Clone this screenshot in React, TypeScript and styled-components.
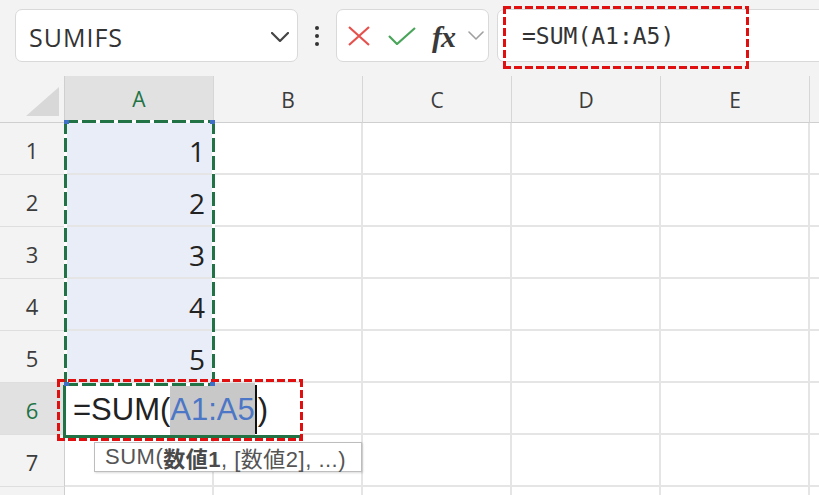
import React from 'react';
import styled, { createGlobalStyle } from 'styled-components';

const GlobalStyle = createGlobalStyle`
  html, body {
    margin: 0;
    padding: 0;
    background: #ffffff;
  }
  body {
    font-family: "Open Sans", "Liberation Sans", "Noto Sans CJK JP", sans-serif;
    overflow: hidden;
  }
`;

const COLS = ['A', 'B', 'C', 'D', 'E', 'F'];
const ROWS = [1, 2, 3, 4, 5, 6, 7, 8];
const VALUES: Record<number, string> = { 1: '1', 2: '2', 3: '3', 4: '4', 5: '5' };

const Page = styled.div`
  width: 819px;
  height: 495px;
  overflow: hidden;
  position: relative;
  background: #f3f3f3;
`;

/* ---------- formula toolbar ---------- */

const Toolbar = styled.div`
  position: relative;
  display: flex;
  align-items: flex-start;
  height: 76px;
  padding: 9px 0 0 15px;
  box-sizing: border-box;
  background: #f3f3f3;
`;

const Box = styled.div<{ $width?: number }>`
  display: flex;
  align-items: center;
  height: 53px;
  box-sizing: border-box;
  background: #ffffff;
  border: 1px solid #d9d9d9;
  border-radius: 7px;
  ${(p) => (p.$width ? `width: ${p.$width}px;` : 'flex: 1; margin-right: -12px;')}
`;

const NameBox = styled(Box)`
  justify-content: space-between;
  padding: 3px 8px 0 13px;
  font-size: 25px;
  letter-spacing: 1px;
  color: #333;
`;

const Kebab = styled.div`
  width: 38px;
  height: 53px;
  display: flex;
  flex-direction: column;
  align-items: center;
  justify-content: center;
  gap: 4px;

  span {
    width: 4px;
    height: 4px;
    border-radius: 50%;
    background: #333;
  }
`;

const ButtonsBox = styled(Box)`
  padding-left: 11px;
`;

const IconSlot = styled.div<{ $w: number }>`
  width: ${(p) => p.$w}px;
  display: flex;
  align-items: center;
  justify-content: flex-start;
`;

const Fx = styled.span`
  font-family: "Liberation Serif", "DejaVu Serif", serif;
  font-style: italic;
  font-weight: bold;
  font-size: 30px;
  color: #3a3a3a;
  letter-spacing: -1px;
  line-height: 1;
  margin-top: 2px;
`;

const FormulaBox = styled(Box)`
  margin-left: 8px;
  padding: 1px 0 0 24px;
  border-radius: 7px 0 0 7px;
  font-family: "DejaVu Sans Mono", "Liberation Mono", monospace;
  font-size: 23px;
  color: #333;
`;

/* ---------- dashed frames (overlays) ---------- */

type FrameProps = {
  $left: number;
  $top: number;
  $width: number;
  $height: number;
  $color: string;
  $gapColor: string;
  $w: number;
  $dash: number;
  $gap: number;
};

const stripes = (p: FrameProps, deg: number) =>
  `repeating-linear-gradient(${deg}deg, ${p.$color} 0 ${p.$dash}px, ${p.$gapColor} ${p.$dash}px ${p.$dash + p.$gap}px)`;

const DashedFrame = styled.div<FrameProps>`
  position: absolute;
  left: ${(p) => p.$left}px;
  top: ${(p) => p.$top}px;
  width: ${(p) => p.$width}px;
  height: ${(p) => p.$height}px;
  pointer-events: none;
  z-index: 5;
  background:
    ${(p) => stripes(p, 90)} top left / 100% ${(p) => p.$w}px no-repeat,
    ${(p) => stripes(p, 90)} bottom left / 100% ${(p) => p.$w}px no-repeat,
    ${(p) => stripes(p, 180)} top left / ${(p) => p.$w}px 100% no-repeat,
    ${(p) => stripes(p, 180)} top right / ${(p) => p.$w}px 100% no-repeat;
`;

const Handle = styled.div<{ $left: number; $top: number }>`
  position: absolute;
  left: ${(p) => p.$left}px;
  top: ${(p) => p.$top}px;
  width: 5px;
  height: 4px;
  background: #3f6fc6;
  z-index: 6;
`;

/* ---------- sheet grid ---------- */

const Sheet = styled.div`
  position: relative;
  display: grid;
  grid-template-columns: 65px repeat(6, 149px);
  grid-template-rows: 47px repeat(8, 52px);
  background: #ffffff;
`;

const Corner = styled.div`
  background: #f3f3f3;
  border-right: 1px solid #cfcfcf;
  border-bottom: 1px solid #cfcfcf;
  box-sizing: border-box;
  display: flex;
  align-items: flex-end;
  justify-content: flex-end;
  padding: 0 5px 6px 0;

  &::after {
    content: '';
    width: 33px;
    height: 29px;
    background: #d8d8d8;
    clip-path: polygon(100% 0, 100% 100%, 0 100%);
  }
`;

const ColHeader = styled.div<{ $active?: boolean }>`
  display: flex;
  align-items: center;
  justify-content: center;
  padding-top: 2px;
  box-sizing: border-box;
  font-size: 21px;
  color: ${(p) => (p.$active ? '#217346' : '#3c3c3c')};
  background: ${(p) => (p.$active ? '#e1e1e1' : '#f3f3f3')};
  border-right: 1px solid #d6d6d6;
  border-bottom: ${(p) => (p.$active ? '3px solid #217346' : '1px solid #cfcfcf')};
`;

const RowHeader = styled.div<{ $active?: boolean }>`
  display: flex;
  align-items: center;
  justify-content: center;
  padding-top: 3px;
  box-sizing: border-box;
  font-size: 22px;
  color: ${(p) => (p.$active ? '#217346' : '#3c3c3c')};
  background: ${(p) => (p.$active ? '#e1e1e1' : '#f3f3f3')};
  border-right: 1px solid #cfcfcf;
  border-bottom: 1px solid #dedede;
`;

const Cell = styled.div<{ $selected?: boolean }>`
  display: flex;
  align-items: center;
  justify-content: flex-end;
  padding: 5px 7px 0 0;
  box-sizing: border-box;
  font-size: 28px;
  color: #222;
  background: ${(p) => (p.$selected ? '#e9edf7' : '#ffffff')};
  border-right: 2px solid #e5e5e5;
  border-bottom: 2px solid #e5e5e5;
`;

/* ---------- in-cell editor ---------- */

const Editor = styled.div`
  position: absolute;
  left: 63px;
  top: 309px;
  width: 237px;
  height: 53px;
  box-sizing: border-box;
  display: flex;
  align-items: stretch;
  padding-left: 7px;
  background: #ffffff;
  border-left: 3px solid #217346;
  border-bottom: 3px solid #217346;
  font-family: "Liberation Sans", "Open Sans", sans-serif;
  font-size: 31px;
  color: #222;
  z-index: 4;
`;

const Piece = styled.span<{ $ref?: boolean }>`
  display: flex;
  align-items: center;
  margin-top: -2px;
  padding-top: 2px;
  ${(p) => (p.$ref ? 'background: #c8c8c8; color: #4c76c6;' : '')}
`;

const Caret = styled.span`
  width: 2px;
  background: #111;
  margin: 0 1px 1px 0;
`;

const Tip = styled.div`
  position: absolute;
  left: 94px;
  top: 366px;
  height: 30px;
  width: 268px;
  box-sizing: border-box;
  display: flex;
  align-items: center;
  padding-left: 10px;
  background: #ffffff;
  border: 1px solid #bdbdbd;
  box-shadow: 1px 1px 2px rgba(0, 0, 0, 0.15);
  font-family: "Liberation Sans", "Noto Sans CJK JP", sans-serif;
  font-size: 22px;
  letter-spacing: 0.5px;
  color: #555;
  white-space: nowrap;
  z-index: 6;

  b {
    font-weight: bold;
    color: #4a4a4a;
  }
`;

const Chevron = ({ color, w, h, sw }: { color: string; w: number; h: number; sw: number }) => (
  <svg width={w} height={h} viewBox={`0 0 ${w} ${h}`}>
    <polyline
      points={`1,1 ${w / 2},${h - 1} ${w - 1},1`}
      fill="none"
      stroke={color}
      strokeWidth={sw}
      strokeLinecap="round"
      strokeLinejoin="round"
    />
  </svg>
);

const CancelIcon = () => (
  <svg width="22" height="20" viewBox="0 0 22 20">
    <path d="M1 1 L21 19 M21 1 L1 19" stroke="#e5514d" strokeWidth="2.2" fill="none" />
  </svg>
);

const EnterIcon = () => (
  <svg width="28" height="18" viewBox="0 0 28 18">
    <path d="M1 9 L9 17 L27 1" stroke="#4aa55a" strokeWidth="2.2" fill="none" />
  </svg>
);

export default function App() {
  return (
    <Page>
      <GlobalStyle />
      <Toolbar>
        <NameBox $width={283}>
          <span>SUMIFS</span>
          <Chevron color="#444" w={18} h={10} sw={2.2} />
        </NameBox>
        <Kebab>
          <span />
          <span />
          <span />
        </Kebab>
        <ButtonsBox $width={153}>
          <IconSlot $w={40}>
            <CancelIcon />
          </IconSlot>
          <IconSlot $w={44}>
            <EnterIcon />
          </IconSlot>
          <IconSlot $w={36}>
            <Fx>fx</Fx>
          </IconSlot>
          <IconSlot $w={18}>
            <Chevron color="#a0a0a0" w={16} h={9} sw={1.6} />
          </IconSlot>
        </ButtonsBox>
        <FormulaBox>=SUM(A1:A5)</FormulaBox>
        <DashedFrame
          $left={503}
          $top={6}
          $width={246}
          $height={63}
          $color="#e01010"
          $gapColor="transparent"
          $w={3}
          $dash={8}
          $gap={3}
        />
      </Toolbar>

      <Sheet>
        <Corner />
        {COLS.map((c) => (
          <ColHeader key={c} $active={c === 'A'}>
            {c === 'F' ? '' : c}
          </ColHeader>
        ))}
        {ROWS.map((r) => (
          <React.Fragment key={r}>
            <RowHeader $active={r === 6}>{r === 8 ? '' : r}</RowHeader>
            {COLS.map((c) => (
              <Cell key={c} $selected={c === 'A' && r <= 5}>
                {c === 'A' ? VALUES[r] : null}
              </Cell>
            ))}
          </React.Fragment>
        ))}

        <DashedFrame
          $left={64}
          $top={44}
          $width={151}
          $height={266}
          $color="#217346"
          $gapColor="#ffffff"
          $w={3}
          $dash={14}
          $gap={4}
        />
        <Handle $left={64} $top={44} />
        <Handle $left={210} $top={44} />
        <Handle $left={64} $top={306} />
        <Handle $left={210} $top={306} />

        <Editor>
          <Piece>=SUM(</Piece>
          <Piece $ref>A1:A5</Piece>
          <Caret />
          <Piece>)</Piece>
        </Editor>

        <Tip>
          SUM(<b>数値1</b>, [数値2], ...)
        </Tip>

        <DashedFrame
          $left={57}
          $top={303}
          $width={246}
          $height={62}
          $color="#e01010"
          $gapColor="transparent"
          $w={3}
          $dash={8}
          $gap={3}
        />
      </Sheet>
    </Page>
  );
}
